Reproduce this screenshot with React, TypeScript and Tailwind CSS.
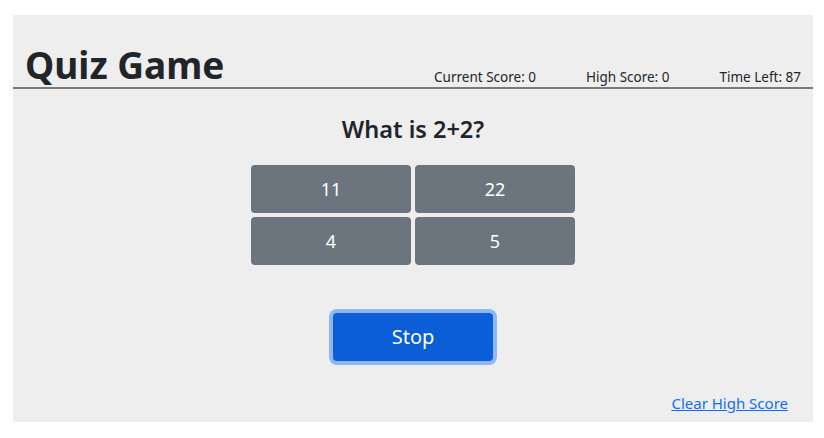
export default function App() {
  const answers = ["11", "22", "4", "5"];

  return (
    <div className="min-h-screen bg-white pt-[15px] font-['Noto_Sans',sans-serif] text-[#212529]">
      <div className="ml-[13px] h-[407px] w-[800px] bg-[#eeeeee]">
        <header className="flex items-end justify-between border-b-2 border-[#7a7a7a] pl-[12px] pr-[12px] pt-[27px]">
          <h1 className="text-[37px] font-bold leading-[45px]">Quiz Game</h1>
          <div className="mb-[1px] flex gap-[50px] text-[13.5px] leading-[18px]">
            <span>Current Score: 0</span>
            <span>High Score: 0</span>
            <span>Time Left: 87</span>
          </div>
        </header>

        <main className="flex flex-col items-center">
          <h2 className="mt-[26px] text-[23.5px] font-semibold leading-[1.2]">What is 2+2?</h2>

          <div className="mt-[22px] grid grid-cols-[160px_160px] gap-x-[4px] gap-y-[4px]">
            {answers.map((a) => (
              <button
                key={a}
                className="h-[48px] rounded-[4px] bg-[#6c757d] text-[18px] text-white"
              >
                {a}
              </button>
            ))}
          </div>

          <button className="mt-[48px] h-[48px] w-[160px] rounded-[4px] bg-[#0b5ed7] text-[20px] text-white ring-4 ring-[#8db8f4]">
            Stop
          </button>
        </main>

        <div className="mt-[31px] flex justify-end pr-[25px]">
          <a href="#" className="text-[15px] text-[#0d6efd] underline">
            Clear High Score
          </a>
        </div>
      </div>
    </div>
  );
}
